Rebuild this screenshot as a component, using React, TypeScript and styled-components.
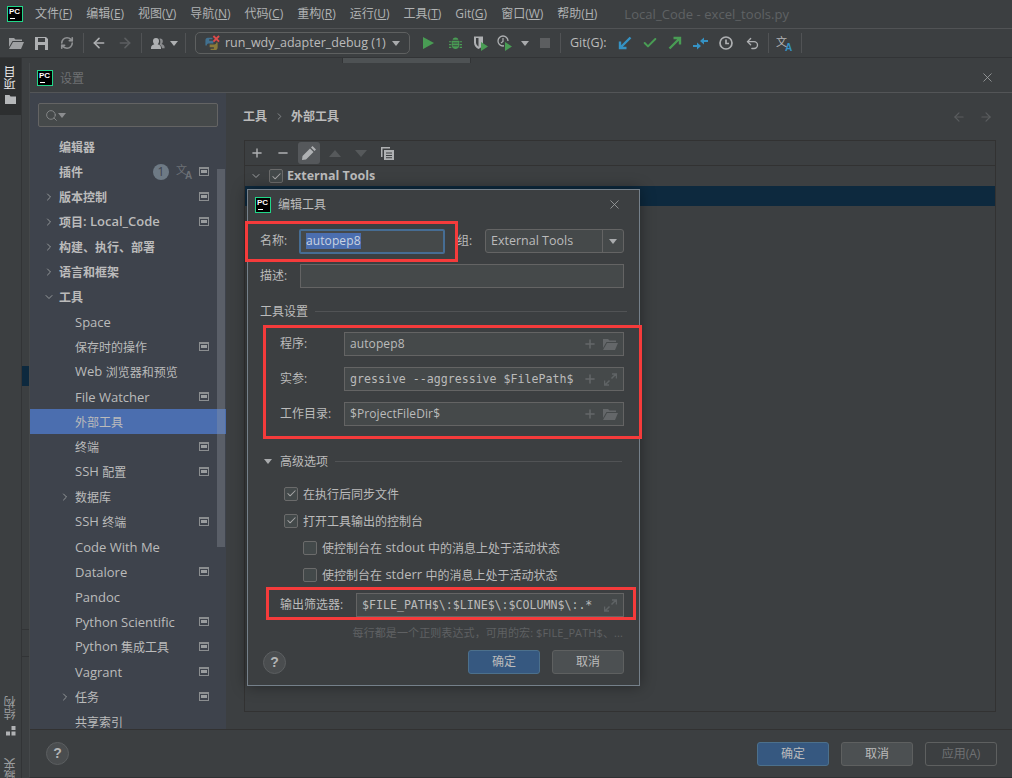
import React from "react";
import styled, { createGlobalStyle } from "styled-components";
import { X, Plus, Minus, ChevronRight, ChevronDown, ArrowLeft, ArrowRight, RefreshCw, Search, Check, Undo2 } from "lucide-react";

const UI = `"Open Sans", "Noto Sans CJK SC", sans-serif`;
const MONO = `"DejaVu Sans Mono", "Noto Sans CJK SC", monospace`;

const Global = createGlobalStyle`
  html, body { margin: 0; padding: 0; background: #3c3f41; overflow: hidden; }
  * { box-sizing: border-box; }
  svg { display: block; flex: none; }
`;

const Page = styled.div`
  width: 1012px; height: 778px; display: flex; flex-direction: column; overflow: hidden;
  background: #3c3f41; color: #bbbbbb; font: 13px/16px ${UI};
`;
const Cjk = styled.span`font-size: 12px; vertical-align: -1px;`;
const Mixed = ({ text }: { text: string }) => (
  <>
    {text.split(/([\u3000-\u9fff\uff00-\uffef]+)/).map((p, i) =>
      /[\u3000-\u9fff\uff00-\uffef]/.test(p) ? <Cjk key={i}>{p}</Cjk> : p
    )}
  </>
);

/* ---------- menu ---------- */
const Logo = styled.span<{ $size: number }>`
  width: ${p => p.$size}px; height: ${p => p.$size}px; flex: none; background: #000; border: 1px solid #21d789;
  color: #fff; font: 700 8px/8px "Liberation Sans", sans-serif; padding: 1px 0 0 1px; position: relative;
  &::after { content: ""; position: absolute; left: 2px; bottom: 2px; width: 5px; height: 1px; background: #fff; }
`;
const MenuBar = styled.div`
  height: 29px; flex: none; display: flex; align-items: center; padding-left: 7px;
  border-bottom: 1px solid #515355; font-size: 12px; color: #b0b2b3;
`;
const Menu = styled.span`margin-left: 14px; white-space: nowrap; ${Logo} + & { margin-left: 12px; }`;
const WindowTitle = styled.span`margin-left: 27px; font-size: 13px; color: #5f6264; letter-spacing: .05px;`;

/* ---------- toolbar ---------- */
const ToolBar = styled.div`
  height: 29px; flex: none; display: flex; align-items: center; padding-left: 9px;
  border-bottom: 1px solid #323436;
`;
const Slot = styled.span<{ $w: number; $gap?: number }>`
  width: ${p => p.$w}px; margin-left: ${p => p.$gap ?? 0}px; flex: none; display: flex; align-items: center; justify-content: center;
`;
const Sep = styled.span<{ $gap: number }>`width: 1px; height: 20px; background: #515355; margin-left: ${p => p.$gap}px; flex: none;`;
const RunConfig = styled.div`
  width: 215px; height: 22px; margin-left: 9px; padding: 0 9px 0 8px; flex: none; display: flex; align-items: center;
  border: 1px solid #5e6060; border-radius: 5px; font-size: 12.5px; white-space: nowrap;
`;
const RunName = styled.span`margin-left: 5px; flex: 1;`;
const GitLabel = styled.span`margin-left: 9px; width: 48px; flex: none; font-size: 12.5px;`;

/* ---------- backdrop ---------- */
const Stage = styled.div`
  flex: 1; min-height: 0; display: grid; grid-template-columns: 22px 7px 1fr; grid-template-rows: 5px 1fr;
`;
const Strip = styled.div`
  grid-row: 1 / 3; border-right: 1px solid #323436; display: flex; flex-direction: column; justify-content: space-between; align-items: center;
  overflow: hidden;
`;
const StripTab = styled.div`
  width: 21px; height: 57px; background: #2d2f30; display: flex; flex-direction: column; align-items: center; gap: 5px; padding-top: 8px;
`;
const Rotated = styled.span<{ $bright?: boolean }>`
  writing-mode: vertical-rl; transform: rotate(180deg); font-size: 12px; line-height: 14px; color: ${p => p.$bright ? "#e8e8e8" : "#9a9c9e"};
`;
const StripBottom = styled.div`display: flex; flex-direction: column; align-items: center; gap: 22px; margin-bottom: -16px;`;
const StripGroup = styled.div`display: flex; flex-direction: column; align-items: center; gap: 6px;`;
const Gutter = styled.div`grid-row: 1 / 3; padding-top: 308px; overflow: hidden;`;
const GutterRow = styled.div`height: 20px; background: #0d293e;`;
const GutterLine = styled.div`height: 1px; background: #323436; margin-top: 243px; & + & { margin-top: 26px; }`;
const TabStub = styled.div`display: flex; align-items: flex-end; padding-left: 313px;`;
const Tab = styled.div`
  width: 129px; height: 5px; background: #4e5254; border-left: 1px solid #323436; border-right: 1px solid #323436;
`;

/* ---------- settings window ---------- */
const SettingsWindow = styled.div`
  position: relative; min-height: 0; display: flex; flex-direction: column; border-left: 1px solid #45484a; border-bottom: 1px solid #2f3133;
`;
const TitleBar = styled.div`
  height: 30px; flex: none; display: flex; align-items: center; padding: 0 17px 0 7px; border-bottom: 1px solid #535557; color: #6e7072;
  gap: 7px;
`;
const TitleText = styled.span`font-size: 12px; margin-top: 2px;`;
const Spacer = styled.span`flex: 1;`;
const Body = styled.div`flex: 1; min-height: 0; display: flex;`;

const Sidebar = styled.div`
  width: 196px; flex: none; background: #3e434c; position: relative; overflow: hidden; padding-top: 10px;
`;
const SearchBox = styled.div`
  height: 24px; margin: 0 8px 7px; padding-left: 6px; background: #45494a; border: 1px solid #646464; border-radius: 2px;
  display: flex; align-items: center; color: #8b8d8f;
`;
const NavRow = styled.div<{ $level: number; $on?: boolean }>`
  height: 25px; display: flex; align-items: center; white-space: nowrap; padding: 0 17px 0 ${p => p.$level ? 29 : 13}px;
  background: ${p => p.$on ? "#4b6eaf" : "transparent"};
`;
const Twisty = styled.span`width: 16px; flex: none; display: flex; color: #9da0a2;`;
const NavLabel = styled.span<{ $strong: boolean }>`flex: 1; font-weight: ${p => p.$strong ? 600 : 400}; color: #bbbbbb;`;
const Badge = styled.span`
  width: 16px; height: 16px; border-radius: 50%; background: #6e7a85; color: #3e434c; text-align: center; font-size: 12px; line-height: 16px; margin-right: 7px;
`;
const NavTranslate = styled.span`margin-right: 5px;`;
const ScrollThumb = styled.div`
  position: absolute; top: 76px; left: 187px; width: 8px; height: 378px; background: rgba(150,155,165,.32);
`;

const Main = styled.div`flex: 1; min-width: 0; display: flex; flex-direction: column; padding: 0 16px 17px 18px;`;
const Crumbs = styled.div`height: 47px; flex: none; margin-left: -1px; display: flex; align-items: center; color: #bbbbbb; font-size: 12px; font-weight: 600;`;
const CrumbArrow = styled.span`width: 24px; display: flex; justify-content: center; color: #8a8d8f;`;
const NavArrows = styled.span`display: flex; gap: 13px; color: #5a5d5f; margin-right: 3px;`;
const Panel = styled.div`flex: 1; border: 1px solid #323232; min-height: 0;`;
const PanelTools = styled.div`height: 25px; display: flex; align-items: center; border-bottom: 1px solid #323232;`;
const PanelTool = styled.span<{ $on?: boolean }>`
  width: 22px; height: 22px; margin-left: 4px; display: flex; align-items: center; justify-content: center; border-radius: 3px;
  background: ${p => p.$on ? "#55585b" : "transparent"}; color: #afb1b3;
  &:first-child { margin-left: 1px; }
`;
const TreeHead = styled.div`height: 20px; display: flex; align-items: center; padding-left: 5px; font-weight: 700; font-size: 12.5px; color: #bbbbbb;`;
const TreeCheck = styled.span`margin-left: 3px; margin-right: 4px; display: flex;`;
const TreeSel = styled.div`height: 20px; background: #0d293e;`;
const Box = styled.span`
  width: 14px; height: 14px; flex: none; border: 1px solid #6b6b6b; border-radius: 2px; background: #43494a; display: flex; align-items: center; justify-content: center; color: #a7a7a7;
`;
const Footer = styled.div`
  height: 48px; flex: none; border-top: 1px solid #323232; display: flex; align-items: center; padding: 0 15px 0 16px; gap: 12px;
`;
const Help = styled.span`
  width: 23px; height: 23px; border-radius: 50%; background: #4a4d4f; border: 1px solid #5c5f61; color: #b2b4b5;
  font: 700 14px/21px "Liberation Sans", sans-serif; text-align: center; flex: none;
`;
const Btn = styled.span<{ $kind: "primary" | "plain" | "off" }>`
  width: 72px; height: 24px; flex: none; border-radius: 3px; font-size: 12px; line-height: 22px; text-align: center;
  border: 1px solid ${p => p.$kind === "primary" ? "#4c708c" : "#5e6060"};
  background: ${p => p.$kind === "primary" ? "#365880" : p.$kind === "plain" ? "#4c5052" : "transparent"};
  color: ${p => p.$kind === "off" ? "#6f7173" : "#bbbbbb"};
`;

/* ---------- dialog ---------- */
const Dialog = styled.div`
  position: absolute; left: 217px; top: 126px; width: 393px; height: 497px; background: #3c3f41; border: 1px solid #75808a;
  box-shadow: 0 0 14px rgba(0,0,0,.4); display: flex; flex-direction: column; padding: 0 15px 0 12px;
`;
const DialogTitle = styled.div`height: 31px; flex: none; display: flex; align-items: center; gap: 7px; margin-left: -5px; margin-right: 2px; padding-bottom: 2px; font-size: 12px;`;
const DialogClose = styled.span`color: #a0a2a4; margin-left: auto; display: flex;`;
const Row = styled.div<{ $top: number; $indent?: number }>`
  display: flex; align-items: center; margin-top: ${p => p.$top}px; margin-left: ${p => p.$indent ?? 0}px; height: 24px; font-size: 12px; flex: none;
`;
const Label = styled.span<{ $w: number }>`width: ${p => p.$w}px; flex: none; white-space: nowrap; font-size: 12px;`;
const NameInput = styled.span`
  width: 146px; height: 25px; flex: none; background: #45494a; border: 2px solid #466d94; border-radius: 2px; padding-left: 5px; display: flex; align-items: center; font-size: 12px; letter-spacing: .1px;
`;
const Selected = styled.span`background: #4b6eaf; color: #c9d3e2; line-height: 16px;`;
const GroupLabel = styled.span`margin-left: 12px; width: 28px; flex: none;`;
const Combo = styled.span`
  width: 139px; height: 24px; flex: none; border: 1px solid #646464; border-radius: 3px; background: #45494a; display: flex; align-items: center; padding-left: 5px; font-size: 12.5px;
`;
const ComboArrow = styled.span`margin-left: auto; width: 21px; height: 22px; border-left: 1px solid #646464; display: flex; align-items: center; justify-content: center;`;
const Tri = styled.span<{ $c?: string }>`
  width: 0; height: 0; flex: none; border-left: 4.5px solid transparent; border-right: 4.5px solid transparent; border-top: 5px solid ${p => p.$c ?? "#a9abad"};
`;
const Field = styled.span<{ $w: number; $mono?: boolean }>`
  width: ${p => p.$w}px; height: 24px; flex: none; background: #45494a; border: 1px solid #646464; padding: 0 3px 0 5px; display: flex; align-items: center; overflow: hidden; white-space: nowrap;
  font: ${p => p.$mono ? `11.6px/16px ${MONO}` : `12px/16px ${UI}`}; ${p => p.$mono ? "" : "letter-spacing: .1px;"}
`;
const FieldText = styled.span`flex: 1; min-width: 0; overflow: hidden;`;
const FieldIcon = styled.span`width: 20px; flex: none; display: flex; justify-content: center; color: #646769;`;
const Section = styled.div<{ $top: number; $indent?: number; $right: number }>`
  height: 16px; flex: none; margin-top: ${p => p.$top}px; margin-right: ${p => p.$right}px; margin-left: ${p => p.$indent ?? 0}px; display: flex; align-items: center; gap: 6px; font-size: 12px;
  &::after { content: ""; flex: 1; height: 1px; background: #515355; margin-left: 1px; }
`;
const SectionLabel = styled.span<{ $gap?: number }>`margin-left: ${p => p.$gap ?? 0}px; margin-top: 2px;`;
const CheckList = styled.div`margin-top: 11px; flex: none;`;
const CheckRow = styled.div<{ $indent: number }>`
  height: 27px; display: flex; align-items: center; gap: 5px; padding-left: ${p => p.$indent}px; font-size: 13px; white-space: nowrap;
`;
const Hint = styled.div`margin-top: 8px; height: 16px; flex: none; text-align: right; font-size: 11px; line-height: 16px; letter-spacing: .1px; color: #5f6163; white-space: nowrap; padding-right: 1px;`;
const DialogFoot = styled.div`margin-top: 9px; display: flex; align-items: center; gap: 12px; margin-left: 3px; flex: none;`;
const Annotation = styled.div<{ $x: number; $y: number; $w: number; $h: number }>`
  position: absolute; left: ${p => p.$x}px; top: ${p => p.$y}px; width: ${p => p.$w}px; height: ${p => p.$h}px; border: 3px solid #f53b3b; pointer-events: none;
`;

/* ---------- icons ---------- */
const FolderOpen = ({ c = "#9fa1a3", w = 15 }: { c?: string; w?: number }) => (
  <svg width={w} height={w * 0.8} viewBox="0 0 15 12"><path fill={c} d="M0 1h5l1.500 1.500H13V4H3.500L0 10z" /><path fill={c} d="M4 5h11l-3 7H0z" /></svg>
);
const Folder = () => (
  <svg width="11" height="9" viewBox="0 0 11 9"><path fill="#b5b7b9" d="M0 0h4.500l1 1.500H11V9H0z" /></svg>
);
const Save = () => (
  <svg width="13" height="13" viewBox="0 0 13 13"><path fill="#aeb0b2" fillRule="evenodd" d="M0 0h11l2 2v11H0zM3 1v4h7V1zM3 8v5h7V8z" /></svg>
);
const UserMenu = () => (
  <svg width="14" height="13" viewBox="0 0 14 13"><path fill="#aeb0b2" d="M5 1a3 3 0 0 1 3 3c0 1.500-.6 2.600-1.400 3.300 2 .6 3.400 1.700 3.400 3.700v1H0v-1c0-2 1.400-3.100 3.400-3.700C2.600 6.600 2 5.500 2 4a3 3 0 0 1 3-3z" /><path fill="#8a8c8e" d="M9 1.500a2.800 2.800 0 0 1 2.800 2.800c0 1.200-.5 2.200-1.200 2.800 1.800.6 3 1.600 3 3.200v1H11c-.2-1.500-1.300-3-2.600-3.700C9.500 6.500 9.800 3.500 8.400 1.700c.2-.1.400-.2.600-.2z" /></svg>
);
const PyX = () => (
  <svg width="16" height="17" viewBox="0 0 17 18">
    <path fill="#41708f" d="M4 3h5v1.500H5.500v1.500H10v3H5c-1 0-2 .5-2 2H1.500V6C1.500 4 2.500 3 4 3z" />
    <path fill="#8a7a3a" d="M12 16H7v-1.500h3.500V13H6v-3h5c1 0 2-.5 2-2h1.500v5c0 2-1 3-2.500 3z" />
    <path stroke="#dd4b4b" strokeWidth="2" d="M10 1l6 6M16 1l-6 6" />
  </svg>
);
const Play = ({ s = 11 }: { s?: number }) => (
  <svg width={s} height={s * 1.1} viewBox="0 0 10 11"><path fill="#499c54" d="M0 0l10 5.500L0 11z" /></svg>
);
const Bug = () => (
  <svg width="13" height="14" viewBox="0 0 14 14"><path fill="#499c54" d="M4 3.500C4 2 5 1 7 1s3 1 3 2.500zM3 4.500h8V10c0 2-2 3.500-4 3.500S3 12 3 10zM0 5h2.500v1.300H0zM11.500 5H14v1.300h-2.500zM0 8h2.500v1.300H0zM11.500 8H14v1.300h-2.500zM0 11h2.500v1.300H0zM11.500 11H14v1.300h-2.500z" /><path stroke="#3c3f41" d="M4 7h6M4 10h6" /></svg>
);
const Coverage = () => (
  <svg width="16" height="16" viewBox="0 0 16 16"><path fill="#aeb0b2" d="M1 1.500h9v6c0 3-2 5.500-4.500 6.500C3 13 1 10.500 1 7.500z" /><path fill="#3c3f41" d="M5.500 3H3v4.500c0 1.500 1 3.200 2.500 4.200z" /><path fill="#499c54" d="M8 7l7 4.500L8 16z" /></svg>
);
const Profile = () => (
  <svg width="16" height="16" viewBox="0 0 16 16"><circle cx="6" cy="6" r="5" fill="none" stroke="#aeb0b2" strokeWidth="1.300" /><path stroke="#aeb0b2" strokeWidth="1.200" fill="none" d="M6 3v3.500L4 8" /><path fill="#3c3f41" d="M7 6h9v10H7z" /><path fill="#499c54" d="M8 7l7 4.500L8 16z" /></svg>
);
const Arrow = ({ c, down }: { c: string; down?: boolean }) => (
  <svg width="14" height="14" viewBox="0 0 14 14" fill="none" stroke={c} strokeWidth="2.400">
    {down ? <path d="M12.500 1.500L2 12M2 5.500V12h6.500" /> : <path d="M1.500 12.500L12 2M5.500 2H12v6.500" />}
  </svg>
);
const MergeIcon = () => (
  <svg width="15" height="15" viewBox="0 0 15 15" fill="#3592c4">
    <path d="M0 9h4V6.500L8 10l-4 3.500V11H0zM15 6h-4v2.500L7 5l4-3.500V4h4z" />
  </svg>
);
const Clock = () => (
  <svg width="14" height="14" viewBox="0 0 14 14" fill="none" stroke="#aeb0b2" strokeWidth="1.700"><circle cx="7" cy="7" r="6" /><path d="M7 3.500V7.500H10" /></svg>
);
const Translate = ({ dim }: { dim?: boolean }) => (
  <svg width="18" height="15" viewBox="0 0 18 15">
    <text x="0" y="10" fontSize="11" fill={dim ? "#6d7176" : "#b4b6b8"} fontFamily="Noto Sans CJK SC">文</text>
    <text x="9" y="14.500" fontSize="10" fontWeight="700" fill={dim ? "#6d7176" : "#3592c4"} fontFamily="Liberation Sans">A</text>
  </svg>
);
const Marker = () => (
  <svg width="10" height="9" viewBox="0 0 10 9"><rect x=".5" y=".5" width="9" height="8" fill="none" stroke="#8b8e90" /><rect x="2" y="3" width="6" height="3" fill="#9a9d9f" /><rect x="1" y="1" width="8" height="1" fill="#8b8e90" /></svg>
);
const Pencil = () => (
  <svg width="14" height="14" viewBox="0 0 14 14"><path fill="#afb1b3" d="M10.500 0L14 3.500 12.500 5 9 1.500zM8 2.500L11.500 6 4 13.500 0 14l.5-4z" /></svg>
);
const Up = ({ c }: { c: string }) => <svg width="12" height="7" viewBox="0 0 12 7"><path fill={c} d="M6 0l6 7H0z" /></svg>;
const Down = ({ c }: { c: string }) => <svg width="12" height="7" viewBox="0 0 12 7"><path fill={c} d="M6 7L0 0h12z" /></svg>;
const Copy = () => (
  <svg width="13" height="13" viewBox="0 0 13 13" fill="#afb1b3"><path d="M0 0h9v1.500H1.500V10H0z" /><path fillRule="evenodd" d="M3 3h10v10H3zM5 5.500v1h6v-1zM5 8v1h6V8zM5 10.300v1h6v-1z" /></svg>
);
const Expand = () => (
  <svg width="13" height="13" viewBox="0 0 13 13" fill="none" stroke="#5f6365" strokeWidth="1.500"><path d="M7.500 5.500L12 1M8 1h4.500v4.500M5.500 7.500L1 12M5 12H.5V7.500" /></svg>
);
const Squares = () => (
  <svg width="10" height="10" viewBox="0 0 10 10" fill="#b0b2b4"><path d="M5.500 0h4v4h-4zM0 5.500h4v4H0zM5.500 5.500h4v4h-4z" /></svg>
);

/* ---------- data ---------- */
type Item = { t: string; level: 0 | 1; tw?: "r" | "d"; m?: boolean; strong?: boolean; on?: boolean; badge?: boolean };
const nav: Item[] = [
  { t: "编辑器", level: 0, strong: true },
  { t: "插件", level: 0, strong: true, m: true, badge: true },
  { t: "版本控制", level: 0, tw: "r", m: true, strong: true },
  { t: "项目: Local_Code", level: 0, tw: "r", m: true, strong: true },
  { t: "构建、执行、部署", level: 0, tw: "r", strong: true },
  { t: "语言和框架", level: 0, tw: "r", strong: true },
  { t: "工具", level: 0, tw: "d", strong: true },
  { t: "Space", level: 1 },
  { t: "保存时的操作", level: 1, m: true },
  { t: "Web 浏览器和预览", level: 1 },
  { t: "File Watcher", level: 1, m: true },
  { t: "外部工具", level: 1, on: true },
  { t: "终端", level: 1, m: true },
  { t: "SSH 配置", level: 1, m: true },
  { t: "数据库", level: 1, tw: "r" },
  { t: "SSH 终端", level: 1, m: true },
  { t: "Code With Me", level: 1 },
  { t: "Datalore", level: 1, m: true },
  { t: "Pandoc", level: 1 },
  { t: "Python Scientific", level: 1, m: true },
  { t: "Python 集成工具", level: 1, m: true },
  { t: "Vagrant", level: 1, m: true },
  { t: "任务", level: 1, tw: "r", m: true },
  { t: "共享索引", level: 1 },
];
const menus: [string, string][] = [
  ["文件", "F"], ["编辑", "E"], ["视图", "V"], ["导航", "N"], ["代码", "C"], ["重构", "R"],
  ["运行", "U"], ["工具", "T"], ["Git", "G"], ["窗口", "W"], ["帮助", "H"],
];

export default function App() {
  return (
    <Page>
      <Global />
      <MenuBar>
        <Logo $size={16}>PC</Logo>
        {menus.map(([a, k]) => <Menu key={k + a}>{a}(<u>{k}</u>)</Menu>)}
        <WindowTitle>Local_Code - excel_tools.py</WindowTitle>
      </MenuBar>
      <ToolBar>
        <Slot $w={15}><FolderOpen /></Slot>
        <Slot $w={13} $gap={11}><Save /></Slot>
        <Slot $w={14} $gap={12}><RefreshCw size={14} strokeWidth={2.8} color="#8f9193" /></Slot>
        <Sep $gap={9} />
        <Slot $w={16} $gap={7}><ArrowLeft size={16} strokeWidth={2.4} color="#aeb0b2" /></Slot>
        <Slot $w={16} $gap={10}><ArrowRight size={16} strokeWidth={2.4} color="#5c5f61" /></Slot>
        <Sep $gap={8} />
        <Slot $w={14} $gap={9}><UserMenu /></Slot>
        <Slot $w={9} $gap={4}><Tri $c="#aeb0b2" /></Slot>
        <Sep $gap={7} />
        <RunConfig>
          <PyX />
          <RunName>run_wdy_adapter_debug (1)</RunName>
          <Tri $c="#a9abad" />
        </RunConfig>
        <Slot $w={11} $gap={13}><Play /></Slot>
        <Slot $w={14} $gap={14}><Bug /></Slot>
        <Slot $w={16} $gap={11}><Coverage /></Slot>
        <Slot $w={16} $gap={8}><Profile /></Slot>
        <Slot $w={9} $gap={7}><Tri $c="#a9abad" /></Slot>
        <Slot $w={11} $gap={10}><svg width="10" height="10"><rect width="10" height="10" fill="#5c5e60" /></svg></Slot>
        <Sep $gap={10} />
        <GitLabel>Git(G):</GitLabel>
        <Slot $w={14}><Arrow c="#3592c4" down /></Slot>
        <Slot $w={14} $gap={11}><Check size={16} strokeWidth={3} color="#499c54" /></Slot>
        <Slot $w={14} $gap={11}><Arrow c="#499c54" /></Slot>
        <Slot $w={15} $gap={11}><MergeIcon /></Slot>
        <Slot $w={14} $gap={11}><Clock /></Slot>
        <Slot $w={14} $gap={12}><Undo2 size={15} strokeWidth={2.2} color="#aeb0b2" /></Slot>
        <Sep $gap={9} />
        <Slot $w={18} $gap={7}><Translate /></Slot>
        <Sep $gap={7} />
      </ToolBar>
      <Stage>
        <Strip>
          <StripTab>
            <Rotated $bright>项目</Rotated>
            <Folder />
          </StripTab>
          <StripBottom>
            <StripGroup>
              <Rotated>结构</Rotated>
              <Squares />
            </StripGroup>
            <Rotated>收藏夹</Rotated>
          </StripBottom>
        </Strip>
        <Gutter>
          <GutterRow />
          <GutterLine />
          <GutterLine />
        </Gutter>
        <TabStub><Tab /></TabStub>
        <SettingsWindow>
          <TitleBar>
            <Logo $size={16}>PC</Logo>
            <TitleText>设置</TitleText>
            <Spacer />
            <X size={15} strokeWidth={1.3} color="#a0a2a4" />
          </TitleBar>
          <Body>
            <Sidebar>
              <SearchBox><Search size={13} strokeWidth={1.6} /><Tri $c="#8b8d8f" /></SearchBox>
              {nav.map(n => (
                <NavRow key={n.t} $level={n.level} $on={n.on}>
                  <Twisty>
                    {n.tw === "r" && <ChevronRight size={12} strokeWidth={1.8} />}
                    {n.tw === "d" && <ChevronDown size={12} strokeWidth={1.8} />}
                  </Twisty>
                  <NavLabel $strong={!!n.strong}><Mixed text={n.t} /></NavLabel>
                  {n.badge && <Badge>1</Badge>}
                  {n.badge && <NavTranslate><Translate dim /></NavTranslate>}
                  {n.m && <Marker />}
                </NavRow>
              ))}
              <ScrollThumb />
            </Sidebar>
            <Main>
              <Crumbs>
                工具
                <CrumbArrow><ChevronRight size={11} strokeWidth={2} /></CrumbArrow>
                外部工具
                <Spacer />
                <NavArrows>
                  <ArrowLeft size={14} strokeWidth={2} />
                  <ArrowRight size={14} strokeWidth={2} />
                </NavArrows>
              </Crumbs>
              <Panel>
                <PanelTools>
                  <PanelTool><Plus size={14} strokeWidth={2.4} /></PanelTool>
                  <PanelTool><Minus size={14} strokeWidth={2.4} /></PanelTool>
                  <PanelTool $on><Pencil /></PanelTool>
                  <PanelTool><Up c="#56595b" /></PanelTool>
                  <PanelTool><Down c="#56595b" /></PanelTool>
                  <PanelTool><Copy /></PanelTool>
                </PanelTools>
                <TreeHead>
                  <Twisty><ChevronDown size={12} strokeWidth={2} /></Twisty>
                  <TreeCheck><Box><Check size={11} strokeWidth={2.2} /></Box></TreeCheck>
                  External Tools
                </TreeHead>
                <TreeSel />
              </Panel>
            </Main>
          </Body>
          <Footer>
            <Help>?</Help>
            <Spacer />
            <Btn $kind="primary">确定</Btn>
            <Btn $kind="plain">取消</Btn>
            <Btn $kind="off">应用(A)</Btn>
          </Footer>

          <Dialog>
            <DialogTitle>
              <Logo $size={16}>PC</Logo>
              编辑工具
              <DialogClose><X size={15} strokeWidth={1.3} /></DialogClose>
            </DialogTitle>
            <Row $top={8}>
              <Label $w={39}>名称:</Label>
              <NameInput><Selected>autopep8</Selected></NameInput>
              <GroupLabel>组:</GroupLabel>
              <Combo>External Tools<ComboArrow><Tri $c="#a9abad" /></ComboArrow></Combo>
            </Row>
            <Row $top={11}>
              <Label $w={40}>描述:</Label>
              <Field $w={324} />
            </Row>
            <Section $top={15} $right={-3}><SectionLabel>工具设置</SectionLabel></Section>
            <Row $top={13} $indent={20}>
              <Label $w={64}>程序:</Label>
              <Field $w={280}>
                <FieldText>autopep8</FieldText>
                <FieldIcon><Plus size={14} strokeWidth={2.6} /></FieldIcon>
                <FieldIcon><FolderOpen c="#646769" /></FieldIcon>
              </Field>
            </Row>
            <Row $top={11} $indent={20}>
              <Label $w={64}>实参:</Label>
              <Field $w={280} $mono>
                <FieldText>gressive --aggressive $FilePath$</FieldText>
                <FieldIcon><Plus size={14} strokeWidth={2.6} /></FieldIcon>
                <FieldIcon><Expand /></FieldIcon>
              </Field>
            </Row>
            <Row $top={11} $indent={20}>
              <Label $w={64}>工作目录:</Label>
              <Field $w={280}>
                <FieldText>$ProjectFileDir$</FieldText>
                <FieldIcon><Plus size={14} strokeWidth={2.6} /></FieldIcon>
                <FieldIcon><FolderOpen c="#646769" /></FieldIcon>
              </Field>
            </Row>
            <Section $top={27} $indent={4} $right={2}>
              <Tri $c="#a9abad" />
              <SectionLabel $gap={2}>高级选项</SectionLabel>
            </Section>
            <CheckList>
              <CheckRow $indent={24}><Box><Check size={11} strokeWidth={2.2} /></Box><span><Mixed text="在执行后同步文件" /></span></CheckRow>
              <CheckRow $indent={24}><Box><Check size={11} strokeWidth={2.2} /></Box><span><Mixed text="打开工具输出的控制台" /></span></CheckRow>
              <CheckRow $indent={43}><Box /><span><Mixed text="使控制台在 stdout 中的消息上处于活动状态" /></span></CheckRow>
              <CheckRow $indent={43}><Box /><span><Mixed text="使控制台在 stderr 中的消息上处于活动状态" /></span></CheckRow>
            </CheckList>
            <Row $top={5} $indent={20}>
              <Label $w={76}>输出筛选器:</Label>
              <Field $w={268} $mono>
                <FieldText>$FILE_PATH$\:$LINE$\:$COLUMN$\:.*</FieldText>
                <FieldIcon><Expand /></FieldIcon>
              </Field>
            </Row>
            <Hint>每行都是一个正则表达式，可用的宏: $FILE_PATH$、...</Hint>
            <DialogFoot>
              <Help>?</Help>
              <Spacer />
              <Btn $kind="primary">确定</Btn>
              <Btn $kind="plain">取消</Btn>
            </DialogFoot>
            <Annotation $x={-3} $y={31} $w={213} $h={41} />
            <Annotation $x={15} $y={135} $w={379} $h={114} />
            <Annotation $x={18} $y={397} $w={370} $h={33} />
          </Dialog>
        </SettingsWindow>
      </Stage>
    </Page>
  );
}
